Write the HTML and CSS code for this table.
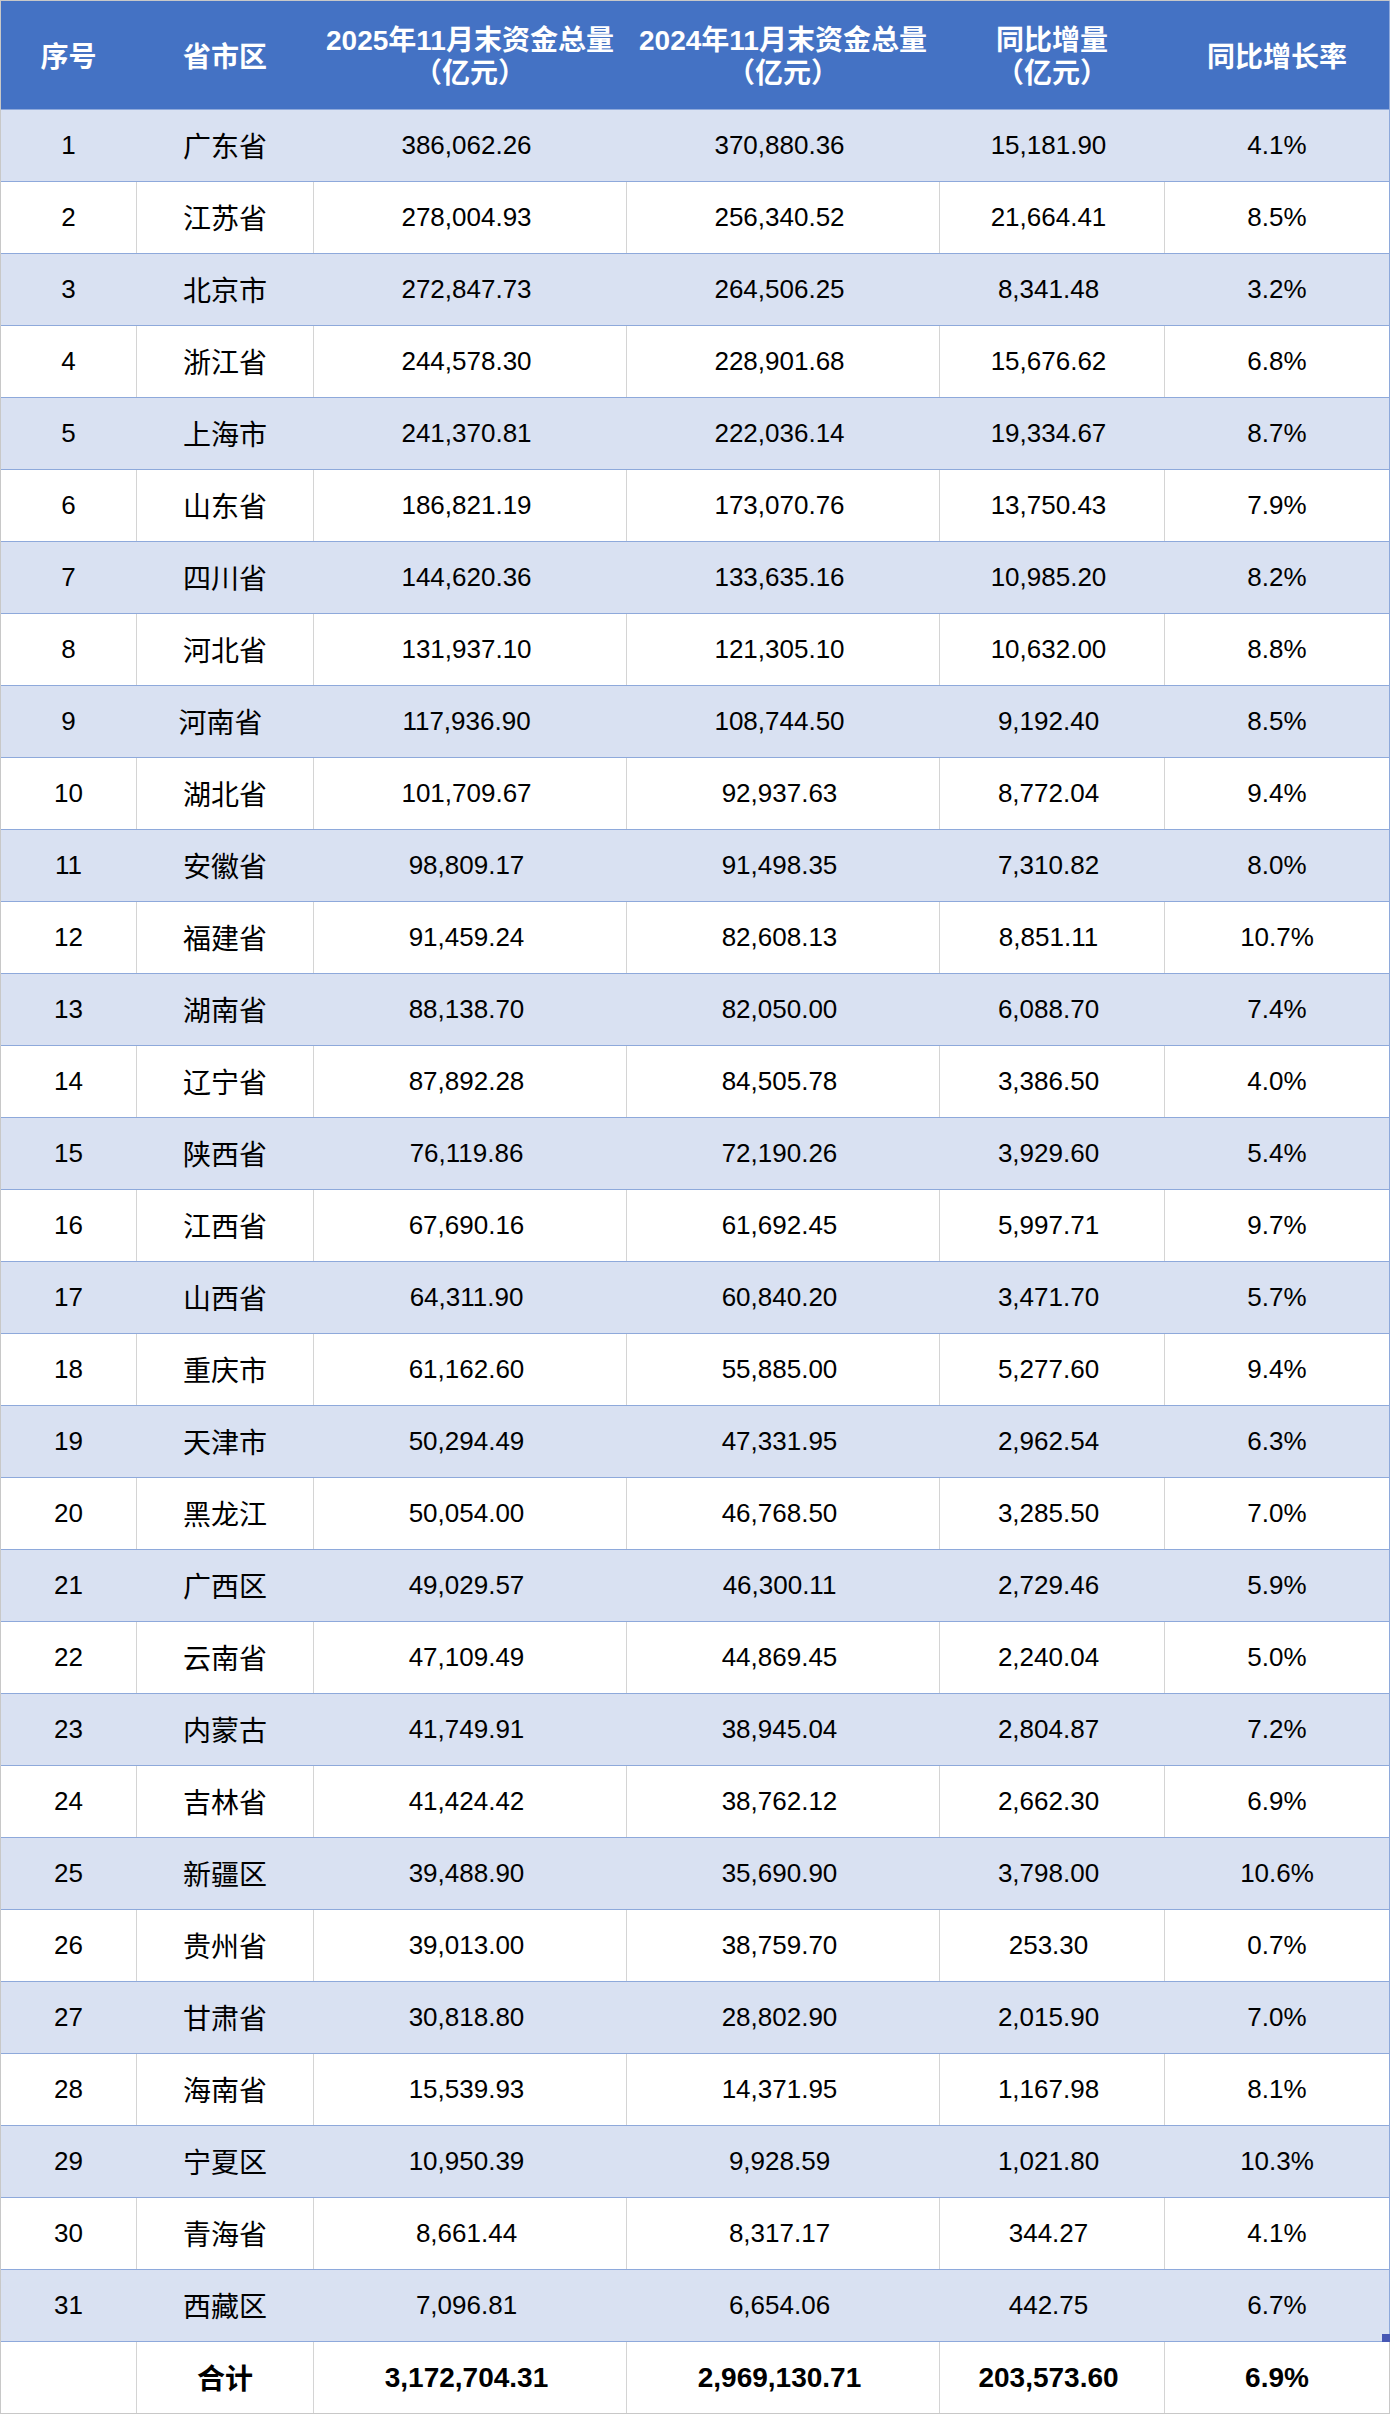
FILE: index.html
```html
<!DOCTYPE html>
<html lang="zh-CN">
<head>
<meta charset="utf-8">
<title>各省市区资金总量</title>
<link rel="stylesheet" href="styles.css">
</head>
<body>
<div class="sheet">
  <div class="row head">
    <div class="cell">序号</div>
    <div class="cell">省市区</div>
    <div class="cell">2025年11月末资金总量<br>（亿元）</div>
    <div class="cell">2024年11月末资金总量<br>（亿元）</div>
    <div class="cell">同比增量<br>（亿元）</div>
    <div class="cell">同比增长率</div>
  </div>
  <div class="row band"><div class="cell idx">1</div><div class="cell name">广东省</div><div class="cell num">386,062.26</div><div class="cell num">370,880.36</div><div class="cell num">15,181.90</div><div class="cell pct">4.1%</div></div>
  <div class="row"><div class="cell idx">2</div><div class="cell name">江苏省</div><div class="cell num">278,004.93</div><div class="cell num">256,340.52</div><div class="cell num">21,664.41</div><div class="cell pct">8.5%</div></div>
  <div class="row band"><div class="cell idx">3</div><div class="cell name">北京市</div><div class="cell num">272,847.73</div><div class="cell num">264,506.25</div><div class="cell num">8,341.48</div><div class="cell pct">3.2%</div></div>
  <div class="row"><div class="cell idx">4</div><div class="cell name">浙江省</div><div class="cell num">244,578.30</div><div class="cell num">228,901.68</div><div class="cell num">15,676.62</div><div class="cell pct">6.8%</div></div>
  <div class="row band"><div class="cell idx">5</div><div class="cell name">上海市</div><div class="cell num">241,370.81</div><div class="cell num">222,036.14</div><div class="cell num">19,334.67</div><div class="cell pct">8.7%</div></div>
  <div class="row"><div class="cell idx">6</div><div class="cell name">山东省</div><div class="cell num">186,821.19</div><div class="cell num">173,070.76</div><div class="cell num">13,750.43</div><div class="cell pct">7.9%</div></div>
  <div class="row band"><div class="cell idx">7</div><div class="cell name">四川省</div><div class="cell num">144,620.36</div><div class="cell num">133,635.16</div><div class="cell num">10,985.20</div><div class="cell pct">8.2%</div></div>
  <div class="row"><div class="cell idx">8</div><div class="cell name">河北省</div><div class="cell num">131,937.10</div><div class="cell num">121,305.10</div><div class="cell num">10,632.00</div><div class="cell pct">8.8%</div></div>
  <div class="row band"><div class="cell idx">9</div><div class="cell name name-pad">河南省</div><div class="cell num">117,936.90</div><div class="cell num">108,744.50</div><div class="cell num">9,192.40</div><div class="cell pct">8.5%</div></div>
  <div class="row"><div class="cell idx">10</div><div class="cell name">湖北省</div><div class="cell num">101,709.67</div><div class="cell num">92,937.63</div><div class="cell num">8,772.04</div><div class="cell pct">9.4%</div></div>
  <div class="row band"><div class="cell idx">11</div><div class="cell name">安徽省</div><div class="cell num">98,809.17</div><div class="cell num">91,498.35</div><div class="cell num">7,310.82</div><div class="cell pct">8.0%</div></div>
  <div class="row"><div class="cell idx">12</div><div class="cell name">福建省</div><div class="cell num">91,459.24</div><div class="cell num">82,608.13</div><div class="cell num">8,851.11</div><div class="cell pct">10.7%</div></div>
  <div class="row band"><div class="cell idx">13</div><div class="cell name">湖南省</div><div class="cell num">88,138.70</div><div class="cell num">82,050.00</div><div class="cell num">6,088.70</div><div class="cell pct">7.4%</div></div>
  <div class="row"><div class="cell idx">14</div><div class="cell name">辽宁省</div><div class="cell num">87,892.28</div><div class="cell num">84,505.78</div><div class="cell num">3,386.50</div><div class="cell pct">4.0%</div></div>
  <div class="row band"><div class="cell idx">15</div><div class="cell name">陕西省</div><div class="cell num">76,119.86</div><div class="cell num">72,190.26</div><div class="cell num">3,929.60</div><div class="cell pct">5.4%</div></div>
  <div class="row"><div class="cell idx">16</div><div class="cell name">江西省</div><div class="cell num">67,690.16</div><div class="cell num">61,692.45</div><div class="cell num">5,997.71</div><div class="cell pct">9.7%</div></div>
  <div class="row band"><div class="cell idx">17</div><div class="cell name">山西省</div><div class="cell num">64,311.90</div><div class="cell num">60,840.20</div><div class="cell num">3,471.70</div><div class="cell pct">5.7%</div></div>
  <div class="row"><div class="cell idx">18</div><div class="cell name">重庆市</div><div class="cell num">61,162.60</div><div class="cell num">55,885.00</div><div class="cell num">5,277.60</div><div class="cell pct">9.4%</div></div>
  <div class="row band"><div class="cell idx">19</div><div class="cell name">天津市</div><div class="cell num">50,294.49</div><div class="cell num">47,331.95</div><div class="cell num">2,962.54</div><div class="cell pct">6.3%</div></div>
  <div class="row"><div class="cell idx">20</div><div class="cell name">黑龙江</div><div class="cell num">50,054.00</div><div class="cell num">46,768.50</div><div class="cell num">3,285.50</div><div class="cell pct">7.0%</div></div>
  <div class="row band"><div class="cell idx">21</div><div class="cell name">广西区</div><div class="cell num">49,029.57</div><div class="cell num">46,300.11</div><div class="cell num">2,729.46</div><div class="cell pct">5.9%</div></div>
  <div class="row"><div class="cell idx">22</div><div class="cell name">云南省</div><div class="cell num">47,109.49</div><div class="cell num">44,869.45</div><div class="cell num">2,240.04</div><div class="cell pct">5.0%</div></div>
  <div class="row band"><div class="cell idx">23</div><div class="cell name">内蒙古</div><div class="cell num">41,749.91</div><div class="cell num">38,945.04</div><div class="cell num">2,804.87</div><div class="cell pct">7.2%</div></div>
  <div class="row"><div class="cell idx">24</div><div class="cell name">吉林省</div><div class="cell num">41,424.42</div><div class="cell num">38,762.12</div><div class="cell num">2,662.30</div><div class="cell pct">6.9%</div></div>
  <div class="row band"><div class="cell idx">25</div><div class="cell name">新疆区</div><div class="cell num">39,488.90</div><div class="cell num">35,690.90</div><div class="cell num">3,798.00</div><div class="cell pct">10.6%</div></div>
  <div class="row"><div class="cell idx">26</div><div class="cell name">贵州省</div><div class="cell num">39,013.00</div><div class="cell num">38,759.70</div><div class="cell num">253.30</div><div class="cell pct">0.7%</div></div>
  <div class="row band"><div class="cell idx">27</div><div class="cell name">甘肃省</div><div class="cell num">30,818.80</div><div class="cell num">28,802.90</div><div class="cell num">2,015.90</div><div class="cell pct">7.0%</div></div>
  <div class="row"><div class="cell idx">28</div><div class="cell name">海南省</div><div class="cell num">15,539.93</div><div class="cell num">14,371.95</div><div class="cell num">1,167.98</div><div class="cell pct">8.1%</div></div>
  <div class="row band"><div class="cell idx">29</div><div class="cell name">宁夏区</div><div class="cell num">10,950.39</div><div class="cell num">9,928.59</div><div class="cell num">1,021.80</div><div class="cell pct">10.3%</div></div>
  <div class="row"><div class="cell idx">30</div><div class="cell name">青海省</div><div class="cell num">8,661.44</div><div class="cell num">8,317.17</div><div class="cell num">344.27</div><div class="cell pct">4.1%</div></div>
  <div class="row band last"><div class="cell idx">31</div><div class="cell name">西藏区</div><div class="cell num">7,096.81</div><div class="cell num">6,654.06</div><div class="cell num">442.75</div><div class="cell pct">6.7%</div><span class="handle"></span></div>
  <div class="row total"><div class="cell idx"></div><div class="cell name">合计</div><div class="cell num">3,172,704.31</div><div class="cell num">2,969,130.71</div><div class="cell num">203,573.60</div><div class="cell pct">6.9%</div></div>
</div>
</body>
</html>
```

FILE: styles.css
```css
html, body {
  margin: 0;
  padding: 0;
  background: #ffffff;
}

.sheet {
  width: 1390px;
  box-sizing: border-box;
  border-top: 1px solid #c8c8c8;
  border-left: 1px solid #c8c8c8;
  font-family: "Liberation Sans", "Noto Sans CJK SC", sans-serif;
  color: #000000;
}

.row {
  position: relative;
  display: grid;
  grid-template-columns: 136px 177px 313px 313px 225px 225px;
  height: 72px;
  box-sizing: border-box;
  border-bottom: 1px solid #8ea9db;
  background: #ffffff;
}

.cell {
  display: flex;
  align-items: center;
  justify-content: center;
  text-align: center;
  box-sizing: border-box;
  border-right: 1px solid #d4d4d4;
  white-space: nowrap;
  font-size: 26px;
  line-height: 1.2;
}

.cell:last-child,
.row .pct {
  border-right-color: #8ea9db;
}

/* header */
.head {
  height: 109px;
  background: #4472c4;
}

.head .cell {
  border-right-color: #4472c4;
  color: #ffffff;
  font-family: "Liberation Sans", "Noto Sans CJK SC", sans-serif;
  font-weight: 700;
  font-size: 28px;
  line-height: 33px;
  padding-top: 4px;
}

.head .cell:last-child {
  border-right-color: #8ea9db;
}

/* banded rows */
.band {
  background: #d9e1f2;
}

.band .cell {
  border-right-color: #d9e1f2;
}

.band .pct {
  border-right-color: #8ea9db;
}

.name {
  font-family: "Noto Sans CJK SC", sans-serif;
  font-size: 28px;
}

.name-pad {
  padding-right: 9px;
}

.num {
  padding-right: 7px;
}

/* totals */
.total {
  border-bottom-color: #c8c8c8;
}

.total .cell {
  font-weight: 700;
  font-size: 28px;
}

.total .pct {
  border-right-color: #c8c8c8;
}

/* excel fill handle */
.handle {
  position: absolute;
  right: 0;
  bottom: -1px;
  width: 8px;
  height: 8px;
  background: #4657b4;
}
```
